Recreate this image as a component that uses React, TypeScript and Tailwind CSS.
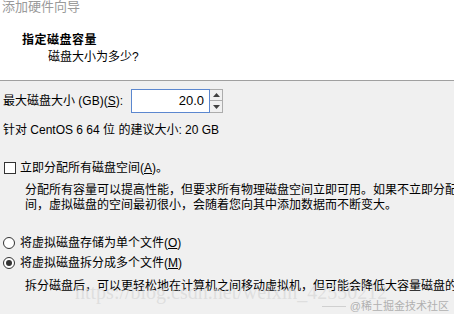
const font = { fontFamily: '"Liberation Sans", "Noto Sans CJK SC", sans-serif' }

function Spinner() {
  return (
    <div className="flex h-[24px] w-[13px] flex-col border border-l-0 border-[#acacac] bg-[#f0f0f0]">
      <div className="flex h-1/2 items-center justify-center border-b border-[#acacac]">
        <svg width="7" height="4" viewBox="0 0 7 4">
          <path d="M0 4 L3.5 0 L7 4 Z" fill="#404040" />
        </svg>
      </div>
      <div className="flex h-1/2 items-center justify-center">
        <svg width="7" height="4" viewBox="0 0 7 4">
          <path d="M0 0 L3.5 4 L7 0 Z" fill="#404040" />
        </svg>
      </div>
    </div>
  )
}

function Radio({ checked }: { checked?: boolean }) {
  return (
    <span className="flex h-[12px] w-[12px] items-center justify-center rounded-full border border-[#333] bg-white">
      {checked && <span className="h-[6px] w-[6px] rounded-full bg-[#333]" />}
    </span>
  )
}

export default function App() {
  return (
    <div className="relative h-[314px] w-[454px] overflow-hidden bg-[#f0f0f0] text-[12px] text-black" style={font}>
      <div className="h-[81px] border-b border-[#a0a0a0] bg-white">
        <p className="pl-[2px] text-[13px] leading-[14px] text-[#9a9a9a]">添加硬件向导</p>
        <p className="mt-[18px] pl-[22px] text-[12px] font-bold leading-[16px] tracking-[0.5px]">指定磁盘容量</p>
        <p className="mt-[1px] pl-[48px] leading-[16px]">磁盘大小为多少?</p>
      </div>

      <div className="flex flex-col pl-[3px] pt-[8px]">
        <div className="flex h-[24px] items-center">
          <span className="w-[128px] whitespace-nowrap">
            最大磁盘大小 (GB)(<span className="underline">S</span>):
          </span>
          <div className="flex h-[24px] w-[79px] items-center justify-end border border-[#5b87cf] bg-white pr-[5px] text-[13px]">
            20.0
          </div>
          <Spinner />
        </div>

        <p className="mt-[9px] whitespace-nowrap leading-[16px]">针对 CentOS 6 64 位 的建议大小: 20 GB</p>

        <div className="mt-[22px] flex items-center gap-[4px] leading-[16px]">
          <span className="ml-[1px] h-[12px] w-[12px] border border-[#333] bg-white" />
          <span className="whitespace-nowrap">
            立即分配所有磁盘空间(<span className="underline">A</span>)。
          </span>
        </div>

        <div className="mt-[7px] pl-[22px] leading-[15px] whitespace-nowrap">
          <p>分配所有容量可以提高性能，但要求所有物理磁盘空间立即可用。如果不立即分配所有空</p>
          <p>间，虚拟磁盘的空间最初很小，会随着您向其中添加数据而不断变大。</p>
        </div>

        <div className="mt-[22px] flex items-center gap-[5px] leading-[16px]">
          <Radio />
          <span className="whitespace-nowrap">
            将虚拟磁盘存储为单个文件(<span className="underline">O</span>)
          </span>
        </div>
        <div className="mt-[4px] flex items-center gap-[5px] leading-[16px]">
          <Radio checked />
          <span className="whitespace-nowrap">
            将虚拟磁盘拆分成多个文件(<span className="underline">M</span>)
          </span>
        </div>

        <p className="mt-[8px] whitespace-nowrap pl-[22px] leading-[15px]">
          拆分磁盘后，可以更轻松地在计算机之间移动虚拟机，但可能会降低大容量磁盘的性能。
        </p>
      </div>

      {/* watermark */}
      <div
        className="pointer-events-none absolute left-[75px] top-[281px] whitespace-nowrap text-[20px] leading-[22px] text-[#d2d2d2]/60"
        style={{ fontFamily: '"Liberation Serif", serif' }}
      >
        https://blog.csdn.net/weixin_42550212
      </div>
      <div className="pointer-events-none absolute right-[5px] top-[300px] flex items-center gap-[4px] text-[11px] leading-[12px] text-[#b0b0b0]">
        <span className="h-px w-[24px] bg-[#d0d0d0]" />
        <span>@稀土掘金技术社区</span>
      </div>
    </div>
  )
}
